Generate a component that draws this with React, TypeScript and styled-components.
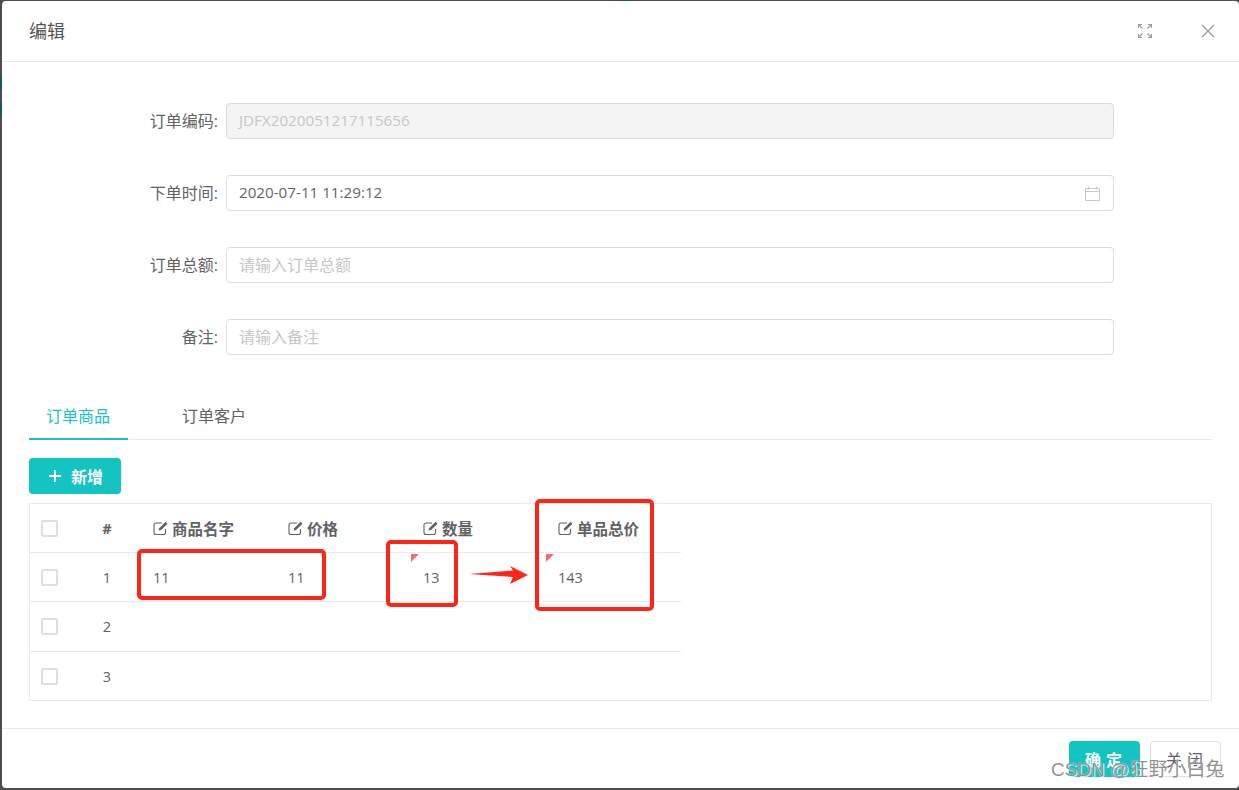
import React from "react";
import styled, { createGlobalStyle } from "styled-components";

const TEAL = "#13c4c3";
const RED = "#ff2516";
const LINE = "#e8eaec";

const GlobalStyle = createGlobalStyle`
  html, body {
    margin: 0;
    padding: 0;
    background: #4d4d4d;
  }
  * {
    box-sizing: border-box;
  }
`;

const Backdrop = styled.div`
  width: 1239px;
  height: 790px;
  padding: 1px 0 2px 2px;
  overflow: hidden;
  background-color: #4d4d4d;
  background-repeat: no-repeat;
  background-size: 100% 1px, 100% 100%;
  background-image: linear-gradient(
      to right,
      #4d4d4d 620px,
      #0b5f60 620px,
      #0b5f60 632px,
      #4d4d4d 632px
    ),
    linear-gradient(
      to bottom,
      #4d4d4d 78px,
      #0b5f60 78px,
      #0b5f60 90px,
      #4d4d4d 90px,
      #4d4d4d 102px,
      #0b5f60 102px,
      #0b5f60 114px,
      #4d4d4d 114px
    );
  font-family: "Open Sans", "Noto Sans CJK SC", sans-serif;
  color: #606266;
`;

const Modal = styled.div`
  position: relative;
  height: 787px;
  display: flex;
  flex-direction: column;
  background: #fff;
  border-radius: 4px;
`;

const Header = styled.header`
  height: 61px;
  flex: none;
  display: flex;
  align-items: center;
  padding: 0 24px 1px 27px;
  border-bottom: 1px solid ${LINE};
`;

const Title = styled.div`
  flex: 1;
  font-size: 18px;
  color: #555;
  padding-bottom: 2px;
`;

const HeaderIcon = styled.button<{ $gap?: number }>`
  all: unset;
  display: flex;
  margin-left: ${({ $gap }) => $gap ?? 0}px;
  color: #999;
`;

const Body = styled.div`
  flex: 1;
  display: flex;
  flex-direction: column;
  padding: 41px 27px 0;
`;

const Form = styled.form`
  display: flex;
  flex-direction: column;
  gap: 36px;
  padding-right: 98px;
`;

const FormRow = styled.div`
  display: flex;
  align-items: center;
  height: 36px;
`;

const Label = styled.label`
  width: 189px;
  margin-right: 8px;
  padding-bottom: 3px;
  flex: none;
  text-align: right;
  font-size: 16px;
  color: #606266;
`;

const Field = styled.div<{ $disabled?: boolean }>`
  flex: 1;
  height: 36px;
  display: flex;
  align-items: center;
  justify-content: space-between;
  padding: 0 13px 0 12px;
  border: 1px solid #dcdcdc;
  border-radius: 4px;
  font-size: 15.2px;
  background: ${({ $disabled }) => ($disabled ? "#f4f4f4" : "#fff")};
  color: ${({ $disabled }) => ($disabled ? "#c6c6c6" : "#666")};
`;

const FieldText = styled.span`
  padding-bottom: 3px;
`;

const Placeholder = styled.span`
  color: #c6c6c6;
  font-size: 16px;
  padding-bottom: 3px;
`;

const Tabs = styled.div`
  display: flex;
  height: 40px;
  margin-top: 45px;
  border-bottom: 1px solid ${LINE};
`;

const Tab = styled.div<{ $active?: boolean }>`
  width: ${({ $active }) => ($active ? 99 : 134)}px;
  height: 40px;
  padding-left: ${({ $active }) => ($active ? 17 : 54)}px;
  line-height: 33px;
  font-size: 16px;
  white-space: nowrap;
  color: ${({ $active }) => ($active ? TEAL : "#606266")};
  border-bottom: ${({ $active }) => ($active ? `2px solid ${TEAL}` : "none")};
`;

const AddButton = styled.button`
  all: unset;
  box-sizing: border-box;
  width: 92px;
  height: 36px;
  margin-top: 18px;
  padding-left: 2px;
  display: flex;
  align-items: center;
  justify-content: center;
  gap: 10px;
  background: ${TEAL};
  border-radius: 4px;
  color: #fff;
  font-size: 16px;
  font-weight: 700;
`;

const TableFrame = styled.div`
  margin-top: 9px;
  height: 198px;
  border: 1px solid ${LINE};
`;

const Row = styled.div<{ $h: number; $head?: boolean }>`
  display: grid;
  grid-template-columns: 43px 68px repeat(4, 135px);
  width: 651px;
  height: ${({ $h }) => $h}px;
  border-bottom: 1px solid ${LINE};
  align-items: center;
  font-size: 14.5px;
  font-weight: ${({ $head }) => ($head ? 700 : 400)};
`;

const CheckCell = styled.div`
  padding-left: 11px;
  display: flex;
`;

const Check = styled.span`
  width: 17px;
  height: 17px;
  border: 2px solid #dcdfe6;
  border-radius: 2px;
  background: #fff;
`;

const SeqCell = styled.div`
  text-align: center;
`;

const Cell = styled.div<{ $dirty?: boolean }>`
  position: relative;
  height: 100%;
  display: flex;
  align-items: center;
  padding-left: 12px;

  ${({ $dirty }) =>
    $dirty &&
    `
    &::before {
      content: "";
      position: absolute;
      left: 0;
      top: 1px;
      border-style: solid;
      border-width: 8px 8px 0 0;
      border-color: #f56c6c transparent transparent transparent;
    }
  `}
`;

const HeadText = styled.span`
  display: flex;
  align-items: center;
  gap: 3px;
  font-size: 15.5px;
  white-space: nowrap;
`;

const Footer = styled.footer`
  height: 60px;
  flex: none;
  display: flex;
  justify-content: flex-end;
  gap: 10px;
  padding: 12px 18px 0 0;
  border-top: 1px solid ${LINE};
`;

const FootButton = styled.button<{ $primary?: boolean }>`
  all: unset;
  box-sizing: border-box;
  width: 71px;
  height: 36px;
  display: flex;
  align-items: center;
  justify-content: center;
  padding-left: 3px;
  border-radius: 4px;
  font-size: 16px;
  letter-spacing: 5px;
  font-weight: ${({ $primary }) => ($primary ? 700 : 400)};
  background: ${({ $primary }) => ($primary ? TEAL : "#fff")};
  color: ${({ $primary }) => ($primary ? "#fff" : "#606266")};
  border: ${({ $primary }) => ($primary ? "none" : "1px solid #dcdfe6")};
`;

const Mark = styled.div<{ $x: number; $y: number; $w: number; $h: number }>`
  position: absolute;
  left: ${({ $x }) => $x}px;
  top: ${({ $y }) => $y}px;
  width: ${({ $w }) => $w}px;
  height: ${({ $h }) => $h}px;
  border: 4px solid ${RED};
  border-radius: 5px;
`;

const ArrowMark = styled.svg`
  position: absolute;
  left: 467px;
  top: 564px;
`;

const Watermark = styled.div`
  position: absolute;
  left: 1051px;
  top: 757px;
  font-family: "Liberation Sans", "Noto Sans CJK SC", sans-serif;
  font-size: 19px;
  line-height: 26px;
  white-space: nowrap;
  color: rgba(125, 125, 125, 0.85);
  text-shadow: 0 0 1px #fff, 1px 1px 0 rgba(255, 255, 255, 0.7);
`;

const EditIcon = () => (
  <svg width="16" height="16" viewBox="0 0 16 16" fill="none">
    <path
      d="M12.5 9v3.5a2 2 0 0 1-2 2H3a2 2 0 0 1-2-2V5a2 2 0 0 1 2-2h6"
      stroke="currentColor"
      strokeWidth="1.1"
    />
    <path d="M6.2 8.2 12.6 1.8l1.9 1.9-6.4 6.4-2.3.4z" fill="currentColor" />
  </svg>
);

const ExpandIcon = () => (
  <svg width="16" height="16" viewBox="0 0 16 16" fill="none" stroke="currentColor" strokeWidth="1.1">
    <path d="M1.5 5v-3.5H5M1.5 1.5l4 4" />
    <path d="M14.5 5v-3.5H11M14.5 1.5l-4 4" />
    <path d="M1.5 11v3.5H5M1.5 14.5l4-4" />
    <path d="M14.5 11v3.5H11M14.5 14.5l-4-4" />
  </svg>
);

const CloseIcon = () => (
  <svg width="14" height="14" viewBox="0 0 14 14" fill="none" stroke="currentColor" strokeWidth="1.2">
    <path d="M1 1l12 12M13 1 1 13" />
  </svg>
);

const CalendarIcon = () => (
  <svg width="15" height="15" viewBox="0 0 15 15" fill="none" stroke="#c8c8c8" strokeWidth="1">
    <rect x="0.5" y="2.5" width="14" height="12" />
    <path d="M0.5 5.5h14M3.5 0.5v3M11.5 0.5v3" />
  </svg>
);

const PlusIcon = () => (
  <svg width="12" height="12" viewBox="0 0 12 12" stroke="#fff" strokeWidth="2">
    <path d="M6 0v12M0 6h12" />
  </svg>
);

const columns = ["商品名字", "价格", "数量", "单品总价"];
const rows = [
  { seq: 1, cells: ["11", "11", "13", "143"], h: 49 },
  { seq: 2, cells: ["", "", "", ""], h: 50 },
  { seq: 3, cells: ["", "", "", ""], h: 49 },
];

export default function App() {
  return (
    <Backdrop>
      <GlobalStyle />
      <Modal>
        <Header>
          <Title>编辑</Title>
          <HeaderIcon>
            <ExpandIcon />
          </HeaderIcon>
          <HeaderIcon $gap={48}>
            <CloseIcon />
          </HeaderIcon>
        </Header>
        <Body>
          <Form>
            <FormRow>
              <Label>订单编码:</Label>
              <Field $disabled>
                <FieldText>JDFX2020051217115656</FieldText>
              </Field>
            </FormRow>
            <FormRow>
              <Label>下单时间:</Label>
              <Field>
                <FieldText>2020-07-11 11:29:12</FieldText>
                <CalendarIcon />
              </Field>
            </FormRow>
            <FormRow>
              <Label>订单总额:</Label>
              <Field>
                <Placeholder>请输入订单总额</Placeholder>
              </Field>
            </FormRow>
            <FormRow>
              <Label>备注:</Label>
              <Field>
                <Placeholder>请输入备注</Placeholder>
              </Field>
            </FormRow>
          </Form>
          <Tabs>
            <Tab $active>订单商品</Tab>
            <Tab>订单客户</Tab>
          </Tabs>
          <AddButton>
            <PlusIcon />
            新增
          </AddButton>
          <TableFrame>
            <Row $h={49} $head>
              <CheckCell>
                <Check />
              </CheckCell>
              <SeqCell>#</SeqCell>
              {columns.map((name) => (
                <Cell key={name}>
                  <HeadText>
                    <EditIcon />
                    {name}
                  </HeadText>
                </Cell>
              ))}
            </Row>
            {rows.map((row) => (
              <Row key={row.seq} $h={row.h}>
                <CheckCell>
                  <Check />
                </CheckCell>
                <SeqCell>{row.seq}</SeqCell>
                {row.cells.map((value, i) => (
                  <Cell key={i} $dirty={row.seq === 1 && i >= 2}>
                    {value}
                  </Cell>
                ))}
              </Row>
            ))}
          </TableFrame>
        </Body>
        <Footer>
          <FootButton $primary>确定</FootButton>
          <FootButton>关闭</FootButton>
        </Footer>
      </Modal>
      <Mark $x={137} $y={549} $w={189} $h={51} />
      <Mark $x={386} $y={540} $w={72} $h={67} />
      <Mark $x={535} $y={499} $w={119} $h={112} />
      <ArrowMark width="64" height="24" viewBox="0 0 64 24">
        <path d="M2 10 46 6.5 43 2 61 11 43 20 46 13z" fill={RED} />
      </ArrowMark>
      <Watermark>CSDN @狂野小白兔</Watermark>
    </Backdrop>
  );
}
